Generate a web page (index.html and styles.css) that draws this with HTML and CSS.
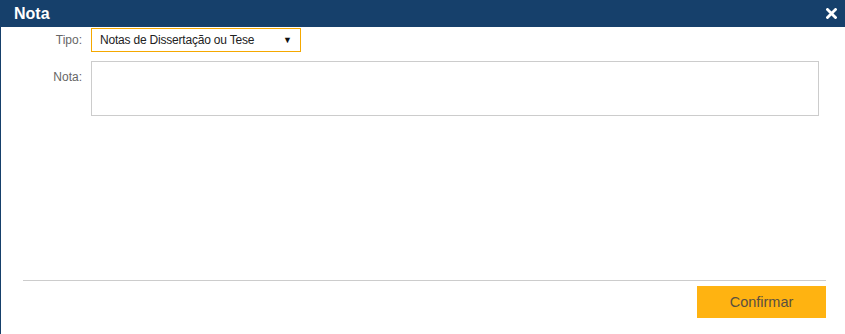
FILE: index.html
```html
<!DOCTYPE html>
<html>
<head>
<meta charset="utf-8">
<link rel="stylesheet" href="styles.css">
</head>
<body>
<div class="dialog">
  <div class="header">
    <span class="title">Nota</span>
    <span class="close">
      <svg width="11" height="11" viewBox="0 0 11 11"><path d="M1.5 1.5 L9.5 9.5 M9.5 1.5 L1.5 9.5" stroke="#fff" stroke-width="2.8" stroke-linecap="square"/></svg>
    </span>
  </div>
  <div class="content">
    <div class="row row-tipo">
      <label class="lbl">Tipo:</label>
      <div class="select">
        <span>Notas de Dissertação ou Tese</span>
        <span class="arrow">▼</span>
      </div>
    </div>
    <div class="row row-nota">
      <label class="lbl">Nota:</label>
      <div class="textarea"></div>
    </div>
  </div>
  <div class="footer">
    <div class="divider"></div>
    <div class="actions">
      <button class="btn">Confirmar</button>
    </div>
  </div>
</div>
</body>
</html>
```
FILE: styles.css
```css
html, body {
  margin: 0;
  padding: 0;
  background: #fff;
}
.dialog {
  width: 845px;
  height: 334px;
  box-sizing: border-box;
  border-left: 1px solid #16406b;
  display: flex;
  flex-direction: column;
  font-family: "Liberation Sans", Arial, sans-serif;
}
.header {
  height: 27px;
  background: #16406b;
  display: flex;
  align-items: center;
  justify-content: space-between;
  padding: 0 8px 0 14px;
  margin-left: -1px;
}
.title {
  color: #fff;
  font-weight: bold;
  font-size: 16px;
}
.close {
  display: flex;
  width: 11px;
  height: 11px;
  margin-top: -1px;
}
.content {
  flex: 1;
}
.row {
  display: flex;
  gap: 9px;
}
.row-tipo {
  margin-top: 1px;
  align-items: center;
}
.row-nota {
  margin-top: 9px;
}
.lbl {
  width: 81px;
  text-align: right;
  font-size: 12px;
  color: #666;
}
.row-nota .lbl {
  padding-top: 9px;
}
.select {
  width: 210px;
  height: 24px;
  box-sizing: border-box;
  border: 1px solid #f5a800;
  display: flex;
  align-items: center;
  justify-content: space-between;
  padding: 0 8px 0 8px;
  font-size: 12px;
  letter-spacing: -0.2px;
  color: #222;
}
.arrow {
  font-size: 9px;
  color: #111;
  letter-spacing: 0;
}
.textarea {
  width: 728px;
  height: 55px;
  box-sizing: border-box;
  border: 1px solid #ccc;
}
.footer {
  padding-bottom: 16px;
}
.divider {
  height: 1px;
  background: #ccc;
  margin: 0 19px 0 22px;
}
.actions {
  display: flex;
  justify-content: flex-end;
  margin-top: 5px;
  padding-right: 19px;
}
.btn {
  width: 129px;
  height: 32px;
  background: #ffb311;
  border: none;
  font-family: "Liberation Sans", Arial, sans-serif;
  font-size: 14.5px;
  color: #5a5040;
  padding: 0;
}
```
